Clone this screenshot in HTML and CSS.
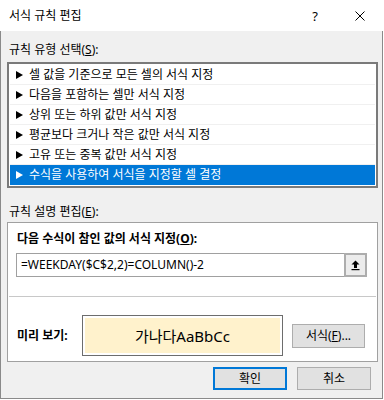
FILE: index.html
```html
<!DOCTYPE html>
<html lang="ko">
<head>
    <meta charset="UTF-8">
    <title>서식 규칙 편집</title>
    <link rel="stylesheet" href="styles.css">
</head>
<body>
    <div class="window">
        <div class="titlebar">
            <span class="title">서식 규칙 편집</span>
            <span class="help">?</span>
            <svg class="close" width="10" height="10" viewBox="0 0 10 10">
                <path d="M0.5 0.5 L9.5 9.5 M9.5 0.5 L0.5 9.5" stroke="#000" stroke-width="1" fill="none"/>
            </svg>
        </div>
        <div class="dialog-body">
            <div class="section-label">규칙 유형 선택(<u>S</u>):</div>
            <ul class="rule-list">
                <li><span class="arrow"></span>셀 값을 기준으로 모든 셀의 서식 지정</li>
                <li><span class="arrow"></span>다음을 포함하는 셀만 서식 지정</li>
                <li><span class="arrow"></span>상위 또는 하위 값만 서식 지정</li>
                <li><span class="arrow"></span>평균보다 크거나 작은 값만 서식 지정</li>
                <li><span class="arrow"></span>고유 또는 중복 값만 서식 지정</li>
                <li class="selected"><span class="arrow"></span>수식을 사용하여 서식을 지정할 셀 결정</li>
            </ul>
            <div class="section-label second">규칙 설명 편집(<u>E</u>):</div>
            <div class="group">
                <div class="group-top">
                    <div class="formula-label">다음 수식이 참인 값의 서식 지정(<u>O</u>):</div>
                    <div class="formula">
                        <div class="formula-text">=WEEKDAY($C$2,2)=COLUMN()-2</div>
                        <button class="collapse-btn" type="button">
                            <svg width="9" height="11" viewBox="0 0 9 11">
                                <path d="M4.5 0.5 L0.5 4.5 L3 4.5 L3 8 L6 8 L6 4.5 L8.5 4.5 Z" fill="#000"/>
                                <rect x="0.5" y="9" width="8" height="1.2" fill="#000"/>
                            </svg>
                        </button>
                    </div>
                </div>
                <div class="divider"></div>
                <div class="group-bottom">
                    <span class="preview-label">미리 보기:</span>
                    <div class="preview">
                        <div class="preview-inner">가나다AaBbCc</div>
                    </div>
                    <button class="btn format-btn" type="button">서식(<u>F</u>)...</button>
                </div>
            </div>
            <div class="actions">
                <button class="btn primary" type="button">확인</button>
                <button class="btn" type="button">취소</button>
            </div>
        </div>
    </div>
</body>
</html>
```

FILE: styles.css
```css
* {
    box-sizing: border-box;
}
body {
    margin: 0;
    background: #fff;
    font-family: "Noto Sans", "Noto Sans CJK KR", sans-serif;
    font-size: 12px;
    color: #000;
}
.window {
    width: 383px;
    height: 399px;
    background: #f0f0f0;
    border: 1px solid #8a8a8a;
    border-top: none;
    display: flex;
    flex-direction: column;
}
.titlebar {
    height: 31px;
    margin: 0 -1px;
    background: #fff;
    display: flex;
    align-items: center;
    padding: 0 18px 0 9px;
}
.title {
    flex: 1;
    font-size: 12px;
    line-height: 16px;
}
.help {
    width: 10px;
    text-align: center;
    font-size: 13px;
    line-height: 16px;
    margin-right: 35px;
}
.close {
    display: block;
}
.dialog-body {
    flex: 1;
    padding: 11px 4px 0 6px;
}
.section-label {
    margin-left: 2px;
    line-height: 16px;
}
.section-label.second {
    margin-top: 16px;
}
.rule-list {
    list-style: none;
    margin: 4px 0 0;
    padding: 1px;
    border: 2px solid #7a7a7a;
    background: #fff;
}
.rule-list li {
    height: 20px;
    display: flex;
    align-items: center;
    gap: 6px;
    padding-left: 6px;
    line-height: 16px;
    border-bottom: 1px solid #f0f0f0;
}
.rule-list li.selected {
    background: #0078d7;
    color: #fff;
    border-bottom-color: #0078d7;
}
.arrow {
    width: 0;
    height: 0;
    border-left: 7px solid currentColor;
    border-top: 4px solid transparent;
    border-bottom: 4px solid transparent;
}
.group {
    margin-top: 2px;
    border: 1px solid #a0a0a0;
    background: #fff;
}
.group-top {
    padding: 8px 10px 19px 8px;
}
.formula-label {
    font-weight: bold;
    margin-left: 1px;
    line-height: 16px;
}
.formula {
    margin-top: 6px;
    height: 24px;
    display: flex;
}
.formula-text {
    flex: 1;
    border: 1px solid #a0a0a0;
    border-right: none;
    padding-left: 4px;
    line-height: 22px;
}
.collapse-btn {
    width: 23px;
    height: 24px;
    padding: 0;
    border: 2px solid #adadad;
    background: #ececec;
    display: flex;
    align-items: center;
    justify-content: center;
}
.divider {
    height: 1px;
    margin: 0 1px;
    background: #c8c8c8;
}
.group-bottom {
    display: flex;
    align-items: center;
    padding: 18px 12px 5px 9px;
}
.preview-label {
    width: 65px;
    font-weight: bold;
    line-height: 16px;
}
.preview {
    width: 201px;
    height: 41px;
    border: 1px solid #6d6d6d;
    padding: 2px;
    background: #fff;
}
.preview-inner {
    height: 100%;
    background: #fff2cc;
    display: flex;
    align-items: center;
    justify-content: center;
    font-size: 15px;
}
.btn {
    font: inherit;
    color: #000;
    background: #e1e1e1;
    border: 1px solid #adadad;
    padding: 0;
    line-height: 16px;
}
.format-btn {
    width: 73px;
    height: 24px;
    margin-left: 9px;
}
.actions {
    display: flex;
    justify-content: flex-end;
    gap: 10px;
    margin-top: 5px;
    padding-right: 7px;
}
.actions .btn {
    width: 74px;
    height: 23px;
}
.actions .primary {
    border: 2px solid #0078d7;
}
```
